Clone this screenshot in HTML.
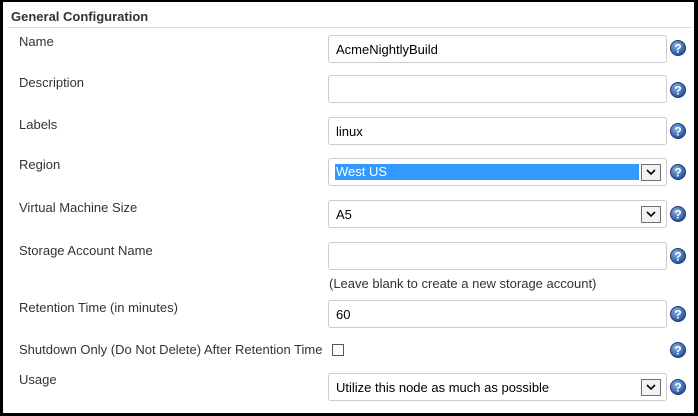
<!DOCTYPE html>
<html><head><style>
html,body{margin:0;padding:0;}
body{width:698px;height:416px;position:relative;background:#000;font-family:"Liberation Sans",Arial,sans-serif;font-size:13px;color:#333;overflow:hidden;}
#p{position:absolute;left:3px;top:2px;width:691px;height:411px;background:#fff;}
.a{position:absolute;}
.h{left:8px;top:7px;font-weight:bold;font-size:13px;color:#333;}
.line{left:5px;top:25px;width:684px;height:1px;background:#ddd;}
.l{left:16px;}
.in{position:absolute;left:325px;height:28px;border:1px solid #ccc;border-radius:3px;box-sizing:border-box;width:339px;font-size:13px;color:#000;}
.in span{position:absolute;left:7px;top:6px;}
.arr{position:absolute;right:5px;top:5px;width:20px;height:17px;border:1px solid #707070;background:#f2f2f2;box-sizing:border-box;}
.hl{position:absolute;left:6px;top:5px;right:27px;height:16px;background:#3399ff;color:#fff;}
.hl span{left:1px;top:0px;}
.q{position:absolute;left:667px;width:16px;height:16px;}
</style></head><body><div id="p">
<div class="a h">General Configuration</div>
<div class="a line"></div>

<div class="a l" style="top:32px">Name</div>
<div class="in" style="top:33px"><span>AcmeNightlyBuild</span></div>

<div class="a l" style="top:73px">Description</div>
<div class="in" style="top:73px"></div>

<div class="a l" style="top:115px">Labels</div>
<div class="in" style="top:115px"><span>linux</span></div>

<div class="a l" style="top:155px">Region</div>
<div class="in" style="top:156px"><div class="hl"><span class="a">West US</span></div><div class="arr"><svg width="18" height="15"><path d="M5 5 L9 9 L13 5" stroke="#000" stroke-width="1.6" fill="none"/></svg></div></div>

<div class="a l" style="top:198px">Virtual Machine Size</div>
<div class="in" style="top:198px"><span>A5</span><div class="arr"><svg width="18" height="15"><path d="M5 5 L9 9 L13 5" stroke="#000" stroke-width="1.6" fill="none"/></svg></div></div>

<div class="a l" style="top:241px">Storage Account Name</div>
<div class="in" style="top:240px"></div>
<div class="a" style="left:326px;top:274px">(Leave blank to create a new storage account)</div>

<div class="a l" style="top:298px">Retention Time (in minutes)</div>
<div class="in" style="top:298px"><span>60</span></div>

<div class="a l" style="top:340px">Shutdown Only (Do Not Delete) After Retention Time</div>
<div class="a" style="left:329px;top:342px;width:12px;height:12px;border:1px solid #555;box-sizing:border-box;"></div>

<div class="a l" style="top:370px">Usage</div>
<div class="in" style="top:371px"><span>Utilize this node as much as possible</span><div class="arr"><svg width="18" height="15"><path d="M5 5 L9 9 L13 5" stroke="#000" stroke-width="1.6" fill="none"/></svg></div></div>

<svg width="0" height="0" style="position:absolute"><defs><radialGradient id="g" cx="40%" cy="35%" r="65%"><stop offset="0" stop-color="#8fb3e0"/><stop offset="1" stop-color="#1f4f9a"/></radialGradient></defs></svg>
<div class="q" style="top:38px"><svg width="16" height="16"><circle cx="8" cy="8" r="7.5" fill="url(#g)" stroke="#1c3f7a"/><text x="8" y="12.5" font-family="Liberation Sans" font-weight="bold" font-size="12" fill="#fff" text-anchor="middle">?</text></svg></div>
<div class="q" style="top:80px"><svg width="16" height="16"><circle cx="8" cy="8" r="7.5" fill="url(#g)" stroke="#1c3f7a"/><text x="8" y="12.5" font-family="Liberation Sans" font-weight="bold" font-size="12" fill="#fff" text-anchor="middle">?</text></svg></div>
<div class="q" style="top:121px"><svg width="16" height="16"><circle cx="8" cy="8" r="7.5" fill="url(#g)" stroke="#1c3f7a"/><text x="8" y="12.5" font-family="Liberation Sans" font-weight="bold" font-size="12" fill="#fff" text-anchor="middle">?</text></svg></div>
<div class="q" style="top:162px"><svg width="16" height="16"><circle cx="8" cy="8" r="7.5" fill="url(#g)" stroke="#1c3f7a"/><text x="8" y="12.5" font-family="Liberation Sans" font-weight="bold" font-size="12" fill="#fff" text-anchor="middle">?</text></svg></div>
<div class="q" style="top:204px"><svg width="16" height="16"><circle cx="8" cy="8" r="7.5" fill="url(#g)" stroke="#1c3f7a"/><text x="8" y="12.5" font-family="Liberation Sans" font-weight="bold" font-size="12" fill="#fff" text-anchor="middle">?</text></svg></div>
<div class="q" style="top:246px"><svg width="16" height="16"><circle cx="8" cy="8" r="7.5" fill="url(#g)" stroke="#1c3f7a"/><text x="8" y="12.5" font-family="Liberation Sans" font-weight="bold" font-size="12" fill="#fff" text-anchor="middle">?</text></svg></div>
<div class="q" style="top:304px"><svg width="16" height="16"><circle cx="8" cy="8" r="7.5" fill="url(#g)" stroke="#1c3f7a"/><text x="8" y="12.5" font-family="Liberation Sans" font-weight="bold" font-size="12" fill="#fff" text-anchor="middle">?</text></svg></div>
<div class="q" style="top:340px"><svg width="16" height="16"><circle cx="8" cy="8" r="7.5" fill="url(#g)" stroke="#1c3f7a"/><text x="8" y="12.5" font-family="Liberation Sans" font-weight="bold" font-size="12" fill="#fff" text-anchor="middle">?</text></svg></div>
<div class="q" style="top:377px"><svg width="16" height="16"><circle cx="8" cy="8" r="7.5" fill="url(#g)" stroke="#1c3f7a"/><text x="8" y="12.5" font-family="Liberation Sans" font-weight="bold" font-size="12" fill="#fff" text-anchor="middle">?</text></svg></div>
</div></body></html>
